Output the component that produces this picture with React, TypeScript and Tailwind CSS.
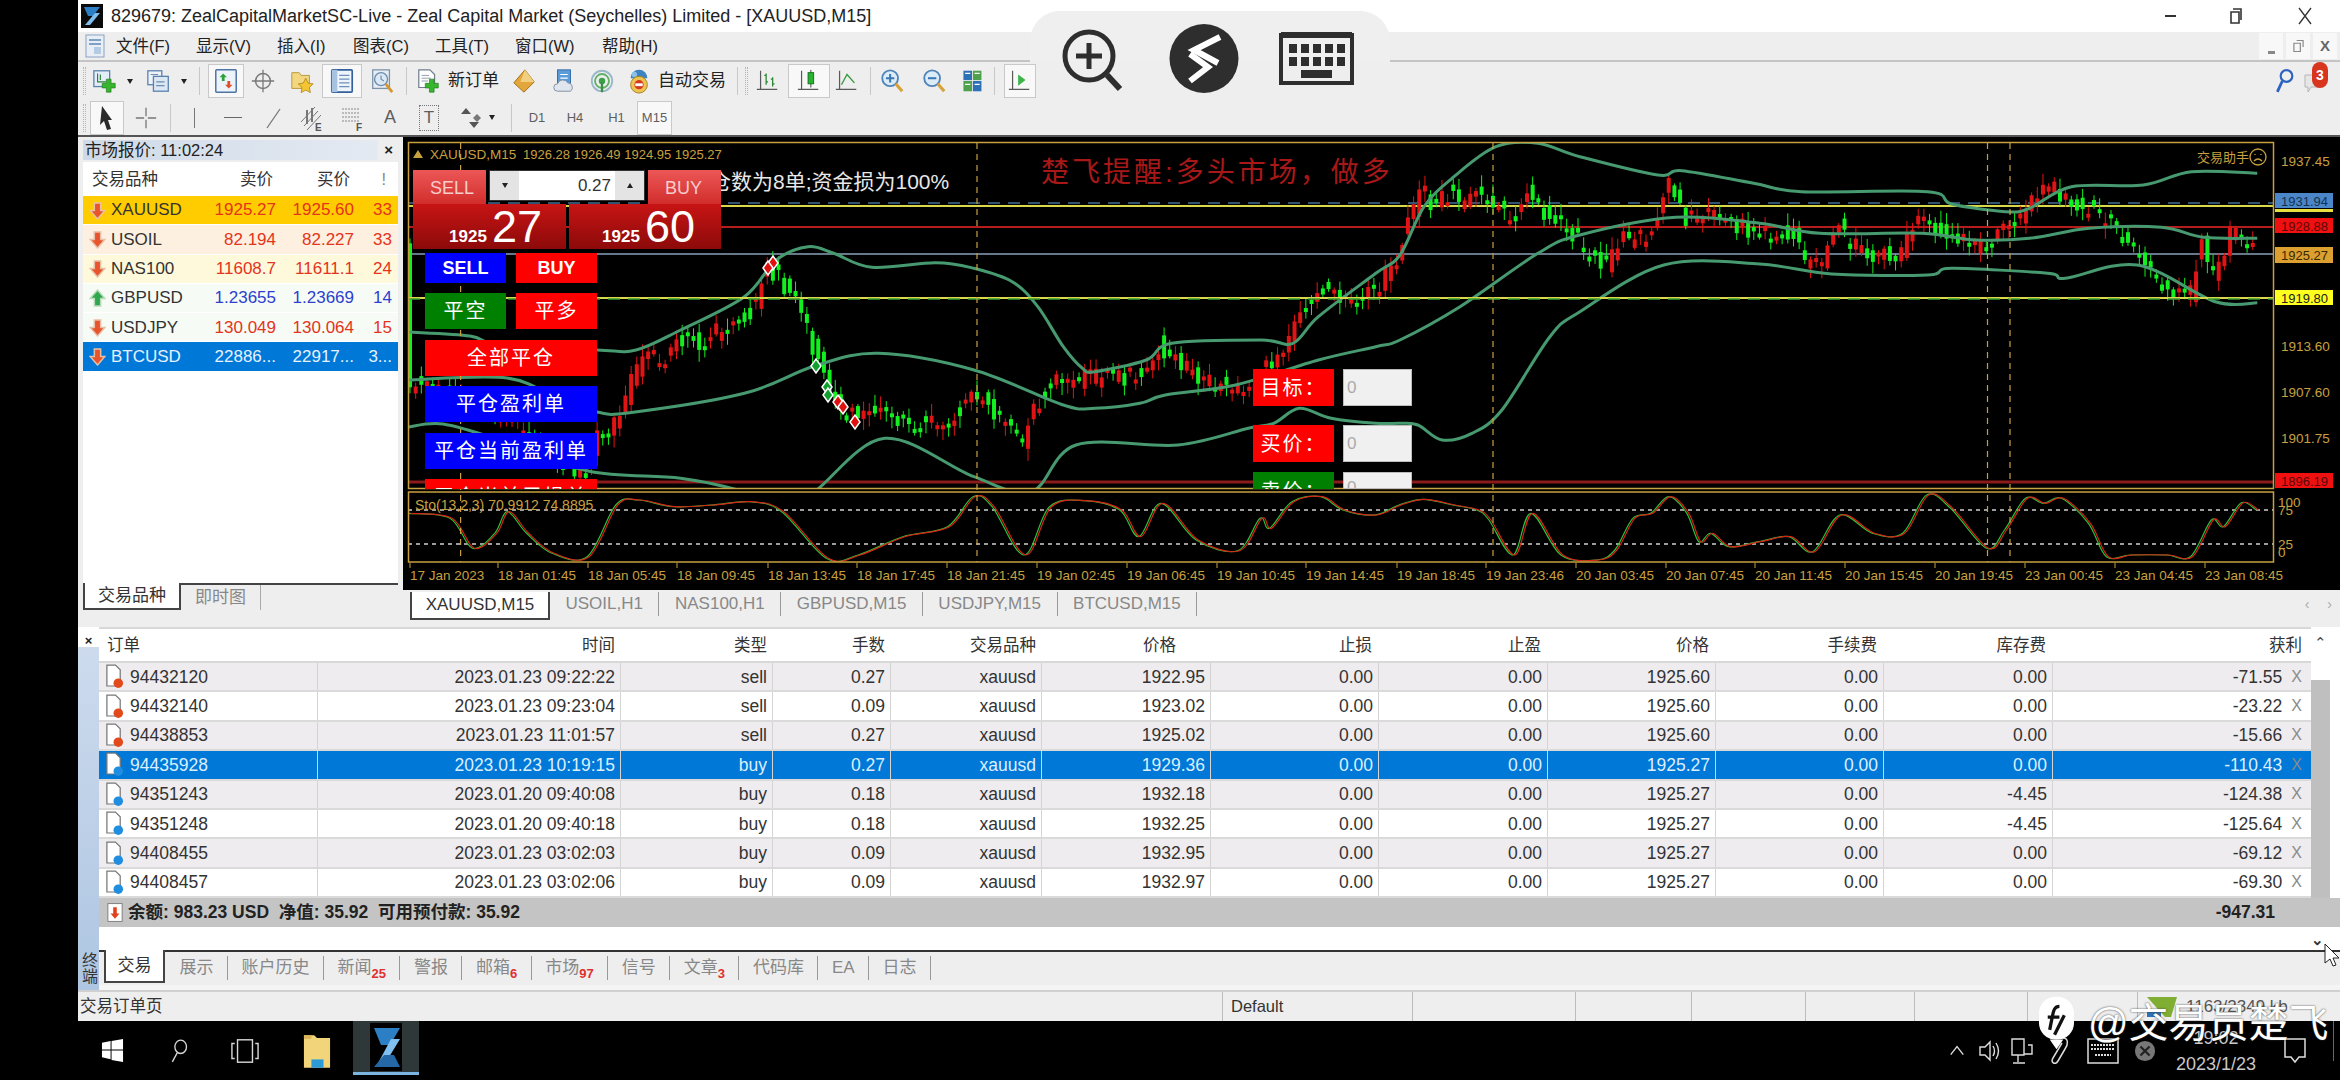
import React from 'react';

type Pt = [number, number];

// reference crops were read in crop units, these map them back to page pixels
const z4 = (a: number[]): Pt[] => {
    const out: Pt[] = [];
    for (let i = 0; i < a.length; i += 2) out.push([400 + a[i] / 1.568, 130 + a[i + 1] / 3]);
    return out;
};
const z5 = (a: number[]): Pt[] => {
    const out: Pt[] = [];
    for (let i = 0; i < a.length; i += 2) out.push([1400 + a[i] / 1.668, 130 + a[i + 1] / 3]);
    return out;
};

// catmull-rom through every point so the peaks stay where they were read
const smooth = (pts: Pt[]) => {
    let d = `M${pts[0][0].toFixed(1)} ${pts[0][1].toFixed(1)}`;
    for (let i = 0; i < pts.length - 1; i++) {
        const p0 = pts[Math.max(0, i - 1)];
        const p1 = pts[i];
        const p2 = pts[i + 1];
        const p3 = pts[Math.min(pts.length - 1, i + 2)];
        const c1x = p1[0] + (p2[0] - p0[0]) / 6;
        const c1y = p1[1] + (p2[1] - p0[1]) / 6;
        const c2x = p2[0] - (p3[0] - p1[0]) / 6;
        const c2y = p2[1] - (p3[1] - p1[1]) / 6;
        d += `C${c1x.toFixed(1)} ${c1y.toFixed(1)} ${c2x.toFixed(1)} ${c2y.toFixed(1)} ${p2[0].toFixed(1)} ${p2[1].toFixed(1)}`;
    }
    return d;
};

const upperBand: Pt[] = [
    [408, 332], [470, 336], [500, 345], [597, 350],
    ...z4([370, 660, 440, 600, 540, 500, 590, 390, 640, 350, 680, 370, 740, 412, 840, 398, 900, 415, 960, 455, 1000, 530, 1040, 650, 1070, 715, 1090, 725, 1170, 690, 1210, 640, 1350, 630, 1400, 640, 1440, 560, 1530, 430]),
    ...z5([0, 375, 40, 230, 90, 140, 160, 50, 230, 40, 300, 80, 430, 135, 470, 122, 590, 160, 670, 185, 880, 185, 920, 222, 1010, 245, 1050, 235, 1120, 170, 1240, 165, 1320, 125, 1430, 130]),
];
const middleBand: Pt[] = [
    [408, 380], [507, 378], [560, 400], [597, 412],
    ...z4([360, 848, 540, 790, 650, 708, 750, 670, 900, 720, 1040, 825, 1090, 835, 1160, 820, 1200, 795, 1310, 765, 1440, 690, 1530, 650]),
    ...z5([0, 630, 100, 530, 230, 370, 300, 315, 460, 262, 600, 280, 700, 310, 870, 310, 960, 330, 1050, 325, 1150, 295, 1270, 292, 1340, 322, 1430, 325]),
];
const lowerBand: Pt[] = [
    [408, 427], [443, 424], [500, 440], [588, 471],
    ...z4([440, 1045, 540, 1085, 600, 1130, 650, 1085, 760, 925, 900, 1040, 990, 1085, 1060, 945, 1220, 945, 1330, 895, 1370, 880, 1410, 835, 1460, 865, 1530, 880]),
    ...z5([0, 880, 30, 885, 70, 930, 120, 910, 170, 840, 250, 620, 300, 545, 440, 405, 600, 402, 720, 432, 880, 435, 920, 415, 1080, 430, 1110, 445, 1230, 405, 1360, 515, 1430, 518]),
];

const pricePath: Pt[] = [
    [408, 385], [425, 385], [470, 400], [520, 425], [560, 465], [590, 470],
    ...z4([315, 920, 350, 850, 380, 690, 420, 690, 440, 630, 480, 630, 520, 590, 560, 530, 580, 420, 600, 440, 625, 520, 650, 640, 665, 720, 680, 790, 700, 860, 730, 850, 780, 860, 820, 880, 870, 860, 905, 790, 940, 850, 980, 930, 1000, 830, 1030, 750, 1090, 745, 1140, 740, 1170, 720, 1195, 640, 1220, 690, 1260, 750, 1300, 770, 1340, 770, 1380, 680, 1400, 600, 1440, 470, 1480, 510, 1530, 490]),
    ...z5([0, 380, 20, 260, 45, 160, 60, 230, 80, 190, 110, 220, 130, 190, 160, 230, 200, 260, 210, 170, 240, 240, 280, 280, 310, 350, 350, 410, 370, 320, 410, 330, 430, 270, 455, 140, 480, 280, 520, 240, 560, 280, 620, 320, 660, 300, 680, 390, 710, 400, 730, 280, 760, 340, 790, 390, 840, 360, 880, 260, 930, 330, 980, 360, 1020, 290, 1050, 240, 1090, 170, 1130, 210, 1170, 260, 1210, 310, 1240, 390, 1290, 480, 1325, 490, 1340, 330, 1360, 430, 1390, 310, 1430, 370]),
];

const stoch: Pt[] = [
    ...z4([15, 1150, 80, 1165, 115, 1255, 150, 1210, 170, 1145, 200, 1210, 240, 1270, 295, 1280, 340, 1125, 375, 1110, 430, 1130, 490, 1125, 550, 1115, 600, 1145, 670, 1285, 720, 1275, 790, 1220, 860, 1190, 900, 1100, 930, 1130, 980, 1275, 1020, 1130, 1075, 1112, 1130, 1140, 1160, 1220, 1195, 1120, 1250, 1230, 1315, 1262, 1350, 1165, 1365, 1195, 1400, 1115, 1445, 1100, 1480, 1140, 1530, 1155]),
    ...z5([0, 1125, 40, 1108, 90, 1125, 130, 1140, 150, 1170, 190, 1275, 220, 1150, 270, 1275, 330, 1290, 360, 1260, 390, 1165, 420, 1150, 450, 1100, 480, 1150, 500, 1235, 520, 1210, 550, 1250, 600, 1235, 650, 1220, 690, 1265, 735, 1155, 790, 1210, 840, 1210, 880, 1095, 920, 1135, 980, 1255, 1010, 1200, 1045, 1105, 1075, 1120, 1105, 1105, 1150, 1180, 1180, 1280, 1220, 1275, 1280, 1275, 1320, 1280, 1355, 1170, 1375, 1190, 1405, 1118, 1430, 1140]),
];

const priceAt = (x: number) => {
    for (let i = 0; i < pricePath.length - 1; i++) {
        const [x0, y0] = pricePath[i];
        const [x1, y1] = pricePath[i + 1];
        if (x >= x0 && x <= x1) return y0 + ((y1 - y0) * (x - x0)) / (x1 - x0 || 1);
    }
    return pricePath[pricePath.length - 1][1];
};

const noise = (i: number) => {
    const v = Math.sin(i * 12.9898) * 43758.5453;
    return v - Math.floor(v);
};

const candles = (() => {
    const out: { x: number; top: number; h: number; wt: number; wb: number; up: boolean }[] = [];
    let i = 0;
    for (let x = 410; x < 2256; x += 5.67) {
        const a = priceAt(x - 3) + (noise(i) - 0.5) * 20;
        const b = priceAt(x + 3) + (noise(i + 500) - 0.5) * 20;
        const top = Math.min(a, b);
        const h = Math.max(4, Math.abs(a - b));
        out.push({ x, top, h, wt: top - 2 - noise(i + 900) * 10, wb: top + h + 2 + noise(i + 1300) * 10, up: b < a });
        i++;
    }
    return out;
})();

const timeLabels: [number, string][] = [
    [410, '17 Jan 2023'], [498, '18 Jan 01:45'], [588, '18 Jan 05:45'], [677, '18 Jan 09:45'], [768, '18 Jan 13:45'],
    [857, '18 Jan 17:45'], [947, '18 Jan 21:45'], [1037, '19 Jan 02:45'], [1127, '19 Jan 06:45'], [1217, '19 Jan 10:45'],
    [1306, '19 Jan 14:45'], [1397, '19 Jan 18:45'], [1486, '19 Jan 23:46'], [1576, '20 Jan 03:45'], [1666, '20 Jan 07:45'],
    [1755, '20 Jan 11:45'], [1845, '20 Jan 15:45'], [1935, '20 Jan 19:45'], [2025, '23 Jan 00:45'], [2115, '23 Jan 04:45'], [2205, '23 Jan 08:45'],
];

const GOLD = '#c8a040';

const markers: [number, number, string][] = [
    [773, 263, '#e01010'], [768, 268, '#e01010'], [816, 366, '#10a030'], [827, 387, '#10a030'], [828, 395, '#10a030'],
    [838, 402, '#e01010'], [843, 407, '#e01010'], [855, 422, '#e01010'],
];

const ChartDrawing = () => (
    <svg viewBox="403 137 1937 453" className="absolute inset-0 h-[453px] w-[1937px]">
        <defs>
            <clipPath id="mainClip"><rect x="408" y="143" width="1865" height="346" /></clipPath>
            <clipPath id="subClip"><rect x="408" y="493" width="1865" height="69" /></clipPath>
        </defs>
        <g clipPath="url(#mainClip)">
            <line x1="408" x2="2273" y1="203" y2="203" stroke="#3f6f96" strokeWidth="1.5" strokeDasharray="12 8" />
            <line x1="408" x2="2273" y1="206" y2="206" stroke="#d8d84a" strokeWidth="2" />
            <line x1="408" x2="2273" y1="227" y2="227" stroke="#b51c1c" strokeWidth="2" />
            <line x1="408" x2="2273" y1="254" y2="254" stroke="#66788a" strokeWidth="2" />
            <line x1="408" x2="2273" y1="482" y2="482" stroke="#8b1a1a" strokeWidth="3" />
            {candles.map((c, i) => (
                <g key={i} fill={c.up ? '#e01414' : '#12f020'} stroke={c.up ? '#e01414' : '#12f020'}>
                    <line x1={c.x} x2={c.x} y1={c.wt} y2={c.wb} strokeWidth="1" />
                    <rect x={c.x - 2} y={c.top} width="4" height={c.h} strokeWidth="0" />
                </g>
            ))}
            <g fill="none" stroke="#479a70" strokeWidth="3" strokeLinejoin="round">
                <path d={smooth(upperBand)} />
                <path d={smooth(middleBand)} />
                <path d={smooth(lowerBand)} />
            </g>
            <line x1="408" x2="2273" y1="298" y2="298" stroke="#d8d84a" strokeWidth="2" />
            <line x1="408" x2="2273" y1="299" y2="299" stroke="#3aa030" strokeWidth="1.5" strokeDasharray="12 8" />
            {markers.map(([x, y, c], i) => (
                <polygon key={i} points={`${x - 5},${y} ${x},${y - 7} ${x + 5},${y} ${x},${y + 7}`} fill={c} stroke="#fff" strokeWidth="1.5" />
            ))}
        </g>
        <g clipPath="url(#subClip)">
            <line x1="408" x2="2273" y1="510" y2="510" stroke="#d0d0d0" strokeWidth="1.5" strokeDasharray="4 4" />
            <line x1="408" x2="2273" y1="544" y2="544" stroke="#d0d0d0" strokeWidth="1.5" strokeDasharray="4 4" />
            <path d={smooth(stoch)} fill="none" stroke="#2fbe3c" strokeWidth="1.2" transform="translate(-1 0)" />
            <path d={smooth(stoch)} fill="none" stroke="#d82414" strokeWidth="1.2" transform="translate(1 0)" />
        </g>
        {[460.6, 977, 1493, 1987.5, 2010].map((x) => (
            <line key={x} x1={x} x2={x} y1="143" y2="562" stroke={GOLD} strokeWidth="1.2" strokeDasharray="6 5" />
        ))}
        <rect x="408.5" y="142.5" width="1865" height="346" fill="none" stroke={GOLD} strokeWidth="1.5" />
        <rect x="408.5" y="492" width="1865" height="70" fill="none" stroke={GOLD} strokeWidth="1.5" />
        <polygon points="413,158 423,158 418,150" fill={GOLD} />
        <g fill={GOLD} fontSize="13.5">
            <text x="430" y="159">XAUUSD,M15</text>
            <text x="523" y="159" fontSize="13">1926.28 1926.49 1924.95 1925.27</text>
            <text x="415" y="510" fontSize="14">Sto(13,2,3) 70.9912 74.8895</text>
            <text x="2197" y="162" fontSize="13">交易助手</text>
            {[[161, '1937.45'], [346, '1913.60'], [392, '1907.60'], [438, '1901.75']].map(([y, t]) => (
                <text key={t} x="2281" y={Number(y) + 5}>{t}</text>
            ))}
            <text x="2278" y="507">100</text>
            <text x="2278" y="515">75</text>
            <text x="2278" y="549">25</text>
            <text x="2278" y="557">0</text>
            {timeLabels.map(([x, t]) => (
                <g key={t}>
                    <line x1={x} x2={x} y1="563" y2="568" stroke={GOLD} />
                    <text x={x} y="580">{t}</text>
                </g>
            ))}
        </g>
        <g fill="none" stroke={GOLD} strokeWidth="1.3">
            <circle cx="2258" cy="157" r="8" />
            <path d="M2254 161q4-4 8 0M2255 154v1M2261 154v1" />
        </g>
        {[
            [193, 15, '#4a86c8', '#14324f', '1931.94'],
            [218, 15, '#f01010', '#5a0808', '1928.88'],
            [247, 16, '#dca030', '#3a2800', '1925.27'],
            [290, 15, '#ffff20', '#222', '1919.80'],
            [473, 15, '#f01010', '#5a0808', '1896.19'],
        ].map(([y, h, bg, fg, t]) => (
            <g key={String(t)}>
                <rect x="2275" y={Number(y)} width="58" height={Number(h)} fill={String(bg)} />
                <text x="2281" y={Number(y) + Number(h) / 2 + 5} fontSize="13" fill={String(fg)}>{t}</text>
            </g>
        ))}
        <rect x="2275" y="209" width="58" height="3" fill="#e8e040" />
    </svg>
);

const Slot = ({ className = '', active = false, children }: { className?: string; active?: boolean; children?: React.ReactNode }) => (
    <div className={`flex h-[34px] shrink-0 items-center justify-center ${active ? 'border border-[#c9c9c9] bg-[#f8f8f8]' : ''} ${className}`}>
        {children}
    </div>
);

const Sep = () => <div className="h-[28px] w-px bg-[#c8c8c8]" />;
const Grip = () => <div className="h-[28px] w-[3px] border-x border-dotted border-[#b5b5b5]" />;
const Caret = () => <div className="h-0 w-0 border-x-[3.5px] border-t-[5px] border-x-transparent border-t-[#222]" />;

const I = ({ children }: { children: React.ReactNode }) => (
    <svg viewBox="0 0 28 28" className="h-[28px] w-[26px]">{children}</svg>
);

const Plus = ({ x, y }: { x: number; y: number }) => (
    <path d={`M${x - 2.5} ${y - 7}h5v4.5h4.5v5h-4.5v4.5h-5v-4.5h-4.5v-5h4.5z`} fill="#37b52e" stroke="#1d7a1a" strokeWidth=".7" />
);

const NewChartIcon = () => (
    <I>
        <rect x="2" y="3" width="17" height="17" fill="#e3edf7" stroke="#5b82ad" strokeWidth="1.4" />
        <path d="M6 6v9h9M9 7v6" fill="none" stroke="#2e7f36" strokeWidth="1.2" />
        <Plus x={18} y={19} />
    </I>
);
const ProfileIcon = () => (
    <I>
        <rect x="2" y="3" width="15" height="15" fill="#eef3f9" stroke="#5b82ad" strokeWidth="1.4" />
        <rect x="8" y="9" width="16" height="16" fill="#dbe7f3" stroke="#5b82ad" strokeWidth="1.4" />
        <path d="M5 7h8M11 15h9M11 19h9" stroke="#6d8db2" strokeWidth="1.2" />
    </I>
);
const MarketIcon = () => (
    <I>
        <rect x="3" y="2" width="22" height="24" rx="1" fill="#edf3fa" stroke="#4e74a3" strokeWidth="1.6" />
        <path d="M11 6l4 4h-2.5v4h-3v-4H7z" fill="#2ea23a" />
        <path d="M17 22l-4-4h2.5v-4h3v4H21z" fill="#e0502a" />
    </I>
);
const CrossIcon = () => (
    <I>
        <circle cx="14" cy="14" r="8" fill="none" stroke="#7a7a7a" strokeWidth="1.6" />
        <path d="M14 2v24M2 14h24" stroke="#7a7a7a" strokeWidth="1.4" />
    </I>
);
const FolderStarIcon = () => (
    <I>
        <path d="M3 5h8l2 3h9v14H3z" fill="#f2d680" stroke="#b8963a" />
        <path d="M18 11l2.6 5.3 5.4.8-4 3.8 1 5.6-5-2.7-5 2.7 1-5.6-4-3.8 5.4-.8z" fill="#f4c531" stroke="#a87d10" strokeWidth=".8" />
    </I>
);
const TerminalIcon = () => (
    <I>
        <rect x="3" y="2" width="22" height="24" rx="1" fill="#eef4fb" stroke="#33609a" strokeWidth="1.8" />
        <rect x="3" y="2" width="6" height="24" fill="#a8c3e2" />
        <path d="M11 8h11M11 12h11M11 16h11M11 20h11" stroke="#6c8fbb" strokeWidth="1.3" />
    </I>
);
const TesterIcon = () => (
    <I>
        <rect x="4" y="2" width="18" height="20" fill="#e9eef4" stroke="#7e93ab" strokeWidth="1.4" />
        <circle cx="13" cy="12" r="7" fill="#dce9f5" stroke="#6e8fb1" strokeWidth="1.5" />
        <path d="M13 8v4l3 2" fill="none" stroke="#6e8fb1" strokeWidth="1.3" />
        <path d="M18 17l7 9" stroke="#d4972f" strokeWidth="3" />
    </I>
);
const NewOrderIcon = () => (
    <I>
        <path d="M3 2h12l5 5v14H3z" fill="#fff" stroke="#6f7d8c" strokeWidth="1.3" />
        <path d="M6 8h8M6 11h10M6 14h7" stroke="#8b98a6" />
        <Plus x={17} y={19} />
    </I>
);
const DiamondIcon = () => (
    <I>
        <path d="M15 2l10 13-11 11L3 16z" fill="#e3a63a" stroke="#9d6c17" />
        <path d="M15 2l-5 13h15z" fill="#f1cf80" />
    </I>
);
const CloudIcon = () => (
    <I>
        <rect x="7" y="2" width="14" height="15" fill="#5b9bd8" stroke="#2e6aa8" />
        <path d="M10 7h8M10 11h8" stroke="#fff" strokeWidth="1.3" />
        <path d="M7 25a4 4 0 0 1 0-8 6 6 0 0 1 11-1 5 5 0 0 1 3 9z" fill="#dfe6ee" stroke="#7e8ea0" />
    </I>
);
const SignalIcon = () => (
    <I>
        <circle cx="14" cy="14" r="11" fill="none" stroke="#9ab8c9" strokeWidth="2" />
        <circle cx="14" cy="14" r="7.5" fill="none" stroke="#62b06a" strokeWidth="2" />
        <circle cx="14" cy="14" r="3.5" fill="#3aa244" />
        <path d="M14 15v11" stroke="#3b8f45" strokeWidth="2.5" />
    </I>
);
const AutoIcon = () => (
    <I>
        <path d="M5 11a9 9 0 0 1 18 0z" fill="#3d83bf" />
        <circle cx="9" cy="7" r="3" fill="#8cc0e8" />
        <circle cx="14" cy="18" r="9" fill="#edc452" stroke="#a67d1a" />
        <circle cx="14" cy="18" r="5" fill="#d7391f" />
        <rect x="10" y="16.5" width="8" height="3" fill="#fff" />
    </I>
);
const AxisIcon = ({ children }: { children: React.ReactNode }) => (
    <I>
        <path d="M6 3v20M2 23h22" stroke="#5a5a5a" strokeWidth="1.3" fill="none" />
        {children}
    </I>
);
const ZoomIcon = ({ plus }: { plus: boolean }) => (
    <I>
        <circle cx="12" cy="11" r="8.5" fill="#dcebf8" stroke="#4f84b8" strokeWidth="2" />
        <path d={plus ? 'M7.5 11h9M12 6.5v9' : 'M7.5 11h9'} stroke="#3a78b5" strokeWidth="2.2" />
        <path d="M18 17l7 8" stroke="#d8a23a" strokeWidth="3.4" />
    </I>
);
const GridIcon = () => (
    <I>
        <rect x="4" y="2" width="10" height="11" fill="#2e70b5" />
        <rect x="15" y="2" width="10" height="11" fill="#4fa24b" />
        <rect x="4" y="14" width="10" height="12" fill="#4fa24b" />
        <rect x="15" y="14" width="10" height="12" fill="#2e70b5" />
        <path d="M6 5h6M17 5h6M6 18h6M17 18h6" stroke="#fff" strokeWidth="1.4" />
    </I>
);

const ToolbarOne = () => (
    <div className="flex h-[38px] items-center bg-[#eeeeee]">
        <Slot className="w-[12px]"><Grip /></Slot>
        <Slot className="w-[30px]"><NewChartIcon /></Slot>
        <Slot className="w-[20px]"><Caret /></Slot>
        <Slot className="w-[38px]"><ProfileIcon /></Slot>
        <Slot className="w-[12px]"><Caret /></Slot>
        <Slot className="w-[18px]"><Sep /></Slot>
        <Slot active className="w-[36px]"><MarketIcon /></Slot>
        <Slot className="w-[38px]"><CrossIcon /></Slot>
        <Slot className="w-[40px]"><FolderStarIcon /></Slot>
        <Slot active className="w-[40px]"><TerminalIcon /></Slot>
        <Slot className="w-[40px]"><TesterIcon /></Slot>
        <Slot className="w-[8px]"><Sep /></Slot>
        <Slot className="w-[38px]"><NewOrderIcon /></Slot>
        <Slot className="w-[52px] justify-start text-[17px] text-[#222]">新订单</Slot>
        <Slot className="w-[48px]"><DiamondIcon /></Slot>
        <Slot className="w-[32px]"><CloudIcon /></Slot>
        <Slot className="w-[44px]"><SignalIcon /></Slot>
        <Slot className="w-[30px]"><AutoIcon /></Slot>
        <Slot className="w-[76px] text-[17px] text-[#222]">自动交易</Slot>
        <Slot className="w-[14px]"><Sep /></Slot>
        <Slot className="w-[4px]"><Grip /></Slot>
        <Slot className="w-[40px]">
            <AxisIcon><path d="M12 6v12M10 8h2M12 15h2M19 10v10M17 12h2M19 17h2" stroke="#2a8a32" strokeWidth="1.4" /></AxisIcon>
        </Slot>
        <Slot active className="w-[42px]">
            <AxisIcon><path d="M16 2v19" stroke="#3a3a3a" /><rect x="13" y="5" width="6" height="12" fill="#25b52e" stroke="#176e1c" /></AxisIcon>
        </Slot>
        <Slot className="w-[34px]">
            <AxisIcon><path d="M8 18l6-11 8 9" fill="none" stroke="#3b9a42" strokeWidth="1.5" /></AxisIcon>
        </Slot>
        <Slot className="w-[12px]"><Sep /></Slot>
        <Slot className="w-[32px]"><ZoomIcon plus /></Slot>
        <Slot className="w-[52px]"><ZoomIcon plus={false} /></Slot>
        <Slot className="w-[24px]"><GridIcon /></Slot>
        <Slot className="w-[20px]"><Sep /></Slot>
        <Slot active className="w-[32px]">
            <AxisIcon><path d="M12 7l8 6-8 6z" fill="#3cb54a" /></AxisIcon>
        </Slot>
        <div className="ml-auto mr-[12px] flex items-center gap-[8px]">
            <svg viewBox="0 0 24 30" className="h-[26px] w-[20px]">
                <circle cx="15" cy="9" r="7" fill="none" stroke="#2d63c0" strokeWidth="2.6" />
                <path d="M10 15L4 28" stroke="#2d63c0" strokeWidth="3.4" />
            </svg>
            <div className="relative h-[28px] w-[26px]">
                <svg viewBox="0 0 26 28" className="absolute inset-0 h-[28px] w-[26px]">
                    <path d="M3 8h15v12H9l-3 5v-5H3z" fill="#e6e6e6" stroke="#b5b5b5" />
                </svg>
                <div className="absolute right-0 top-[-5px] flex h-[26px] w-[16px] items-center justify-center rounded-full bg-[#d8351f] text-[14px] font-bold text-white">3</div>
            </div>
        </div>
    </div>
);

const ToolbarTwo = () => (
    <div className="flex h-[35px] items-center bg-[#eeeeee] text-[#5e5e5e]">
        <Slot className="w-[12px]"><Grip /></Slot>
        <Slot active className="w-[34px]">
            <svg viewBox="0 0 20 28" className="h-[28px] w-[20px]"><path d="M5 2l10 14H11l3 9-4 1-3-9-4 4z" fill="#2a2a2a" /></svg>
        </Slot>
        <Slot className="w-[44px]">
            <svg viewBox="0 0 26 26" className="h-[26px] w-[24px]"><path d="M13 2v9M13 15v9M2 13h9M15 13h9" stroke="#777" strokeWidth="1.4" /></svg>
        </Slot>
        <Slot className="w-[4px]"><Sep /></Slot>
        <Slot className="w-[44px]"><div className="h-[20px] w-px bg-[#777]" /></Slot>
        <Slot className="w-[34px]"><div className="h-px w-[18px] bg-[#666]" /></Slot>
        <Slot className="w-[48px]">
            <svg viewBox="0 0 20 24" className="h-[24px] w-[20px]"><path d="M3 22L16 3" stroke="#777" strokeWidth="1.3" /></svg>
        </Slot>
        <Slot className="w-[26px]">
            <svg viewBox="0 0 24 28" className="h-[28px] w-[24px]">
                <path d="M2 18L16 3M5 22L19 7M8 26L22 11" stroke="#777" />
                <path d="M8 6v14M13 4v14" stroke="#777" strokeWidth="2" />
                <text x="16" y="27" fontSize="10" fontWeight="700" fill="#555">E</text>
            </svg>
        </Slot>
        <Slot className="w-[56px]">
            <svg viewBox="0 0 26 28" className="h-[28px] w-[26px]">
                <path d="M3 5h18M3 9h18M3 13h18M3 17h18" stroke="#888" strokeDasharray="2 1" />
                <text x="17" y="27" fontSize="10" fontWeight="700" fill="#555">F</text>
            </svg>
        </Slot>
        <Slot className="w-[20px] text-[18px]">A</Slot>
        <Slot className="w-[58px]">
            <div className="flex h-[26px] w-[20px] items-center justify-center border border-dotted border-[#777] text-[17px] leading-none">T</div>
        </Slot>
        <Slot className="w-[24px]">
            <svg viewBox="0 0 24 26" className="h-[26px] w-[24px]">
                <path d="M8 3l5 6H3z" fill="#555" />
                <path d="M16 23l-5-6h10z" fill="#555" />
                <path d="M19 9l4 4-4 4-4-4z" fill="#777" />
            </svg>
        </Slot>
        <Slot className="w-[20px]"><Caret /></Slot>
        <Slot className="w-[18px]"><Sep /></Slot>
        <Slot className="w-[34px] text-[13px]">D1</Slot>
        <Slot className="w-[42px] text-[13px]">H4</Slot>
        <Slot className="w-[41px] text-[13px]">H1</Slot>
        <Slot active className="w-[35px] text-[13px]">M15</Slot>
    </div>
);

const watchRows = [
    { name: 'XAUUSD', bid: '1925.27', ask: '1925.60', sp: '33', up: false, row: 'bg-[#ffcc00]', text: 'text-[#e4341c]', nameText: 'text-[#333]' },
    { name: 'USOIL', bid: '82.194', ask: '82.227', sp: '33', up: false, row: 'bg-[#fdf0e1]', text: 'text-[#e4341c]', nameText: 'text-[#333]' },
    { name: 'NAS100', bid: '11608.7', ask: '11611.1', sp: '24', up: false, row: 'bg-[#fff9dc]', text: 'text-[#e4341c]', nameText: 'text-[#333]' },
    { name: 'GBPUSD', bid: '1.23655', ask: '1.23669', sp: '14', up: true, row: 'bg-[#f6fcf5]', text: 'text-[#2c3fcf]', nameText: 'text-[#333]' },
    { name: 'USDJPY', bid: '130.049', ask: '130.064', sp: '15', up: false, row: 'bg-[#f6fcf5]', text: 'text-[#e4341c]', nameText: 'text-[#333]' },
    { name: 'BTCUSD', bid: '22886...', ask: '22917...', sp: '3...', up: false, row: 'bg-[#0078d7]', text: 'text-[#e6f2ff]', nameText: 'text-[#e6f2ff]' },
];

const ArrowMark = ({ up }: { up: boolean }) => (
    <svg viewBox="0 0 16 18" className="h-[19px] w-[17px] shrink-0">
        {up ? (
            <path d="M8 1l7 8h-4v7H5V9H1z" fill="#30a850" stroke="#b8dcb8" strokeWidth="1.4" />
        ) : (
            <path d="M8 17l7-8h-4V2H5v7H1z" fill="#e8552c" stroke="#e8c0a8" strokeWidth="1.4" />
        )}
    </svg>
);

const MarketWatch = () => (
    <div className="flex h-[490px] w-[325px] shrink-0 flex-col bg-[#eeeeee] pl-[5px] pr-[5px] pt-[3px]">
        <div className="flex h-[20px] items-center justify-between">
            <div className="flex h-[20px] w-[295px] items-center bg-gradient-to-r from-[#cfdae8] to-[#e4eaf2] pl-[2px] text-[16.5px] text-[#222]">市场报价: 11:02:24</div>
            <span className="mr-[5px] text-[15px] font-bold text-[#222]">×</span>
        </div>
        <div className="mt-[2px] flex h-[421px] flex-col bg-white">
            <div className="grid h-[34px] grid-cols-[121px_77px_78px_39px] items-center text-[16.5px] text-[#333]">
                <span className="pl-[9px]">交易品种</span>
                <span className="pr-[8px] text-right">卖价</span>
                <span className="pr-[9px] text-right">买价</span>
                <span className="pr-[12px] text-right text-[#888]">!</span>
            </div>
            {watchRows.map((r) => (
                <div key={r.name} className={`grid h-[29.3px] grid-cols-[121px_77px_78px_39px] items-center border-b border-white text-[17px] ${r.row}`}>
                    <span className={`flex items-center gap-[5px] pl-[6px] ${r.nameText}`}><ArrowMark up={r.up} />{r.name}</span>
                    <span className={`pr-[5px] text-right ${r.text}`}>{r.bid}</span>
                    <span className={`pr-[5px] text-right ${r.text}`}>{r.ask}</span>
                    <span className={`pr-[6px] text-right ${r.text}`}>{r.sp}</span>
                </div>
            ))}
        </div>
        <div className="flex h-[27px] items-stretch border-t-2 border-[#444] text-[17px]">
            <div className="-mt-[2px] flex w-[98px] items-center justify-center border-x-2 border-b-2 border-x-[#444] border-b-[#444] border-t-0 bg-white text-[#333]">交易品种</div>
            <div className="flex w-[80px] items-center justify-center border-r border-[#aaa] text-[#888]">即时图</div>
        </div>
    </div>
);

const redBtn = 'bg-[#ff0000]';
const blueBtn = 'bg-[#0000ff]';
const greenBtn = 'bg-[#008000]';
const btnBase = 'absolute flex items-center justify-center text-white text-[20px] tracking-[2px]';
const latinBtn = 'absolute flex items-center justify-center text-white text-[18px] font-bold';

const ChartPanel = () => (
    <div className="relative h-[453px] w-[1937px] shrink-0 overflow-hidden bg-black">
        <ChartDrawing />

        {/* text notes printed on the chart */}
        <div className="absolute left-[307px] top-[32px] text-[21px] leading-[26px] text-[#e8e8e8]">仓数为8单;资金损为100%</div>
        <div className="absolute left-[638px] top-[19px] text-[28px] leading-[34px] tracking-[3px] text-[#a81818]">楚飞提醒:多头市场，做多</div>

        {/* one click trading panel */}
        <div className="absolute left-[10px] top-[33px] h-[46px] w-[73px] border-b border-[#ff9c9c] bg-gradient-to-b from-[#ec5656] to-[#c81a1a] pl-[17px] pt-[5px] text-[18px] text-[#f8cccc]">SELL</div>
        <div className="absolute left-[245px] top-[33px] h-[46px] w-[73px] border-b border-[#ff9c9c] bg-gradient-to-b from-[#ec5656] to-[#c81a1a] pl-[17px] pt-[5px] text-[18px] text-[#f8cccc]">BUY</div>
        <div className="absolute left-[86px] top-[33px] flex h-[31px] w-[156px] border border-[#333] bg-white">
            <div className="flex w-[29px] items-center justify-center bg-[#e4e4e4]"><Caret /></div>
            <div className="flex-1 pr-[4px] text-right text-[17px] leading-[29px] text-[#333]">0.27</div>
            <div className="flex w-[29px] items-center justify-center bg-[#e4e4e4]">
                <div className="h-0 w-0 border-x-[3.5px] border-b-[5px] border-x-transparent border-b-[#222]" />
            </div>
        </div>
        <div className="absolute left-[10px] top-[67px] flex h-[45px] w-[153px] items-end justify-end bg-gradient-to-b from-[#c81414] to-[#8c0a0a] pb-[1px] pr-[24px] text-white">
            <span className="mb-[3px] mr-[5px] text-[17px] font-bold leading-none">1925</span>
            <span className="text-[45px] leading-[42px]">27</span>
        </div>
        <div className="absolute left-[166px] top-[67px] flex h-[45px] w-[152px] items-end justify-end bg-gradient-to-b from-[#c81414] to-[#8c0a0a] pb-[1px] pr-[26px] text-white">
            <span className="mb-[3px] mr-[5px] text-[17px] font-bold leading-none">1925</span>
            <span className="text-[45px] leading-[42px]">60</span>
        </div>

        {/* script buttons */}
        <div className={`${latinBtn} ${blueBtn} left-[22px] top-[116px] h-[30px] w-[81px]`}>SELL</div>
        <div className={`${latinBtn} ${redBtn} left-[113px] top-[116px] h-[30px] w-[81px]`}>BUY</div>
        <div className={`${btnBase} ${greenBtn} left-[22px] top-[156px] h-[36px] w-[81px]`}>平空</div>
        <div className={`${btnBase} ${redBtn} left-[113px] top-[156px] h-[36px] w-[81px]`}>平多</div>
        <div className={`${btnBase} ${redBtn} left-[22px] top-[203px] h-[36px] w-[172px]`}>全部平仓</div>
        <div className={`${btnBase} ${blueBtn} left-[22px] top-[249px] h-[36px] w-[172px]`}>平仓盈利单</div>
        <div className={`${btnBase} ${blueBtn} left-[22px] top-[296px] h-[36px] w-[172px]`}>平仓当前盈利单</div>
        <div className="absolute left-[22px] top-[342px] h-[10px] w-[172px] overflow-hidden">
            <div className={`${btnBase} ${redBtn} left-0 top-0 h-[36px] w-[172px]`}>平仓当前亏损单</div>
        </div>

        <div className={`${btnBase} ${redBtn} left-[850px] top-[232px] h-[37px] w-[81px]`}>目标：</div>
        <div className="absolute left-[940px] top-[232px] flex h-[37px] w-[69px] items-center border border-[#bbb] bg-[#f0f0f0] pl-[3px] text-[17px] text-[#aaa]">0</div>
        <div className={`${btnBase} ${redBtn} left-[850px] top-[288px] h-[37px] w-[81px]`}>买价：</div>
        <div className="absolute left-[940px] top-[288px] flex h-[37px] w-[69px] items-center border border-[#bbb] bg-[#f0f0f0] pl-[3px] text-[17px] text-[#aaa]">0</div>
        <div className="absolute left-[850px] top-[335px] h-[17px] w-[81px] overflow-hidden">
            <div className={`${btnBase} ${greenBtn} left-0 top-0 h-[37px] w-[81px]`}>卖价：</div>
        </div>
        <div className="absolute left-[940px] top-[335px] h-[17px] w-[69px] overflow-hidden border border-[#bbb] bg-[#f0f0f0] pl-[3px] text-[17px] leading-[30px] text-[#aaa]">0</div>
    </div>
);

const ChartTabs = () => (
    <div className="flex h-[37px] items-start bg-[#eeeeee] pl-[7px] pt-[2px] text-[17px]">
        <div className="flex h-[28px] w-[140px] items-center justify-center border-x-2 border-b-2 border-x-[#444] border-b-[#444] bg-white text-[#333]">XAUUSD,M15</div>
        {['USOIL,H1', 'NAS100,H1', 'GBPUSD,M15', 'USDJPY,M15', 'BTCUSD,M15'].map((t) => (
            <div key={t} className="flex h-[24px] items-center border-r border-[#999] px-[15.5px] text-[#888]">{t}</div>
        ))}
        <div className="ml-auto mr-[8px] mt-[2px] flex gap-[18px] text-[14px] text-[#aaa]">
            <span>‹</span>
            <span>›</span>
        </div>
    </div>
);

const orderCols = 'grid-cols-[219px_303px_152px_118px_151px_169px_168px_169px_168px_168px_169px_258px]';

const orders = [
    ['94432120', '2023.01.23 09:22:22', 'sell', '0.27', '1922.95', '1925.60', '0.00', '-71.55'],
    ['94432140', '2023.01.23 09:23:04', 'sell', '0.09', '1923.02', '1925.60', '0.00', '-23.22'],
    ['94438853', '2023.01.23 11:01:57', 'sell', '0.27', '1925.02', '1925.60', '0.00', '-15.66'],
    ['94435928', '2023.01.23 10:19:15', 'buy', '0.27', '1929.36', '1925.27', '0.00', '-110.43'],
    ['94351243', '2023.01.20 09:40:08', 'buy', '0.18', '1932.18', '1925.27', '-4.45', '-124.38'],
    ['94351248', '2023.01.20 09:40:18', 'buy', '0.18', '1932.25', '1925.27', '-4.45', '-125.64'],
    ['94408455', '2023.01.23 03:02:03', 'buy', '0.09', '1932.95', '1925.27', '0.00', '-69.12'],
    ['94408457', '2023.01.23 03:02:06', 'buy', '0.09', '1932.97', '1925.27', '0.00', '-69.30'],
];

const OrderIcon = ({ buy }: { buy: boolean }) => (
    <svg viewBox="0 0 20 26" className="h-[25px] w-[19px] shrink-0">
        <path d="M2 1h9l5 5v17H2z" fill="#fff" stroke="#777" strokeWidth="1.3" />
        <circle cx="14" cy="20" r="5" fill={buy ? '#1f8de0' : '#e24a1c'} />
    </svg>
);

const Cell = ({ className = '', children }: { className?: string; children?: React.ReactNode }) => (
    <div className={`flex h-full items-center justify-end border-r border-[#d4d4d4] pr-[5px] ${className}`}>{children}</div>
);

const OrdersTable = () => (
    <div className="flex flex-1 flex-col bg-white">
        <div className="flex h-[271px]">
            <div className="w-[2212px] shrink-0">
                <div className={`grid h-[36px] items-center border-t-2 border-b-2 border-[#d8d8d8] ${orderCols} text-[16.5px] text-[#333]`}>
                    <span className="pl-[8px]">订单</span>
                    {['时间', '类型', '手数', '交易品种'].map((h) => (
                        <span key={h} className="pr-[6px] text-right">{h}</span>
                    ))}
                    <span className="pr-[35px] text-right">价格</span>
                    {['止损', '止盈', '价格', '手续费', '库存费'].map((h, i) => (
                        <span key={i} className="pr-[7px] text-right">{h}</span>
                    ))}
                    <span className="pr-[9px] text-right">获利</span>
                </div>
                {orders.map((o) => {
                    const sel = o[0] === '94435928';
                    const bg = sel ? 'bg-[#0078d7] text-[#dcefff]' : orders.indexOf(o) % 2 === 0 ? 'bg-[#efecef] text-[#333]' : 'bg-white text-[#333]';
                    return (
                        <div key={o[0]} className={`grid h-[29.4px] items-center border-b-2 border-[#dadada] text-[17.5px] ${orderCols} ${bg}`}>
                            <div className="flex h-full items-center gap-[6px] border-r border-[#d4d4d4] pl-[6px]"><OrderIcon buy={o[2] === 'buy'} />{o[0]}</div>
                            <Cell>{o[1]}</Cell>
                            <Cell>{o[2]}</Cell>
                            <Cell>{o[3]}</Cell>
                            <Cell>xauusd</Cell>
                            <Cell>{o[4]}</Cell>
                            <Cell>0.00</Cell>
                            <Cell>0.00</Cell>
                            <Cell>{o[5]}</Cell>
                            <Cell>0.00</Cell>
                            <Cell>{o[6]}</Cell>
                            <div className="flex h-full items-center justify-end gap-[9px] pr-[9px]">
                                <span>{o[7]}</span>
                                <span className="text-[16px] text-[#8a8a8a]">X</span>
                            </div>
                        </div>
                    );
                })}
            </div>
            <div className="flex w-[19px] flex-col items-center text-[#444]">
                <div className="h-[53px] pt-[8px] text-[15px] leading-none">⌃</div>
                <div className="w-full flex-1 bg-[#bfbfbf]" />
            </div>
            <div className="flex-1" />
        </div>
        <div className="flex h-[29px] items-center justify-between bg-[#c4c4c4] pl-[8px] text-[17.5px] font-bold text-[#222]">
            <span className="flex items-center gap-[5px]">
                <svg viewBox="0 0 18 22" className="h-[21px] w-[16px]">
                    <rect x="1" y="1" width="16" height="20" fill="#fff" stroke="#777" />
                    <path d="M9 18l5-6h-3V5H7v7H4z" fill="#e2401c" />
                </svg>
                余额: 983.23 USD&nbsp; 净值: 35.92&nbsp; 可用预付款: 35.92
            </span>
            <span className="mr-[65px]">-947.31</span>
        </div>
        <div className="relative h-[23px]">
            <div className="absolute right-[16px] top-[5px] text-[15px] font-bold leading-none text-[#333]">⌄</div>
        </div>
    </div>
);

const bottomTabs: [string, string?][] = [
    ['展示'], ['账户历史'], ['新闻', '25'], ['警报'], ['邮箱', '6'], ['市场', '97'], ['信号'], ['文章', '3'], ['代码库'], ['EA'], ['日志'],
];

const BottomTabs = () => (
    <div className="flex h-[35px] items-start border-t-2 border-[#333] bg-[#eeeeee] pl-[5px] text-[17px]">
        <div className="-mt-[2px] flex h-[33px] w-[61px] items-center justify-center border-x-2 border-b-2 border-x-[#444] border-b-[#444] bg-white text-[#333]">交易</div>
        <div className="ml-[1px] flex pt-[4px]">
            {bottomTabs.map(([t, sub]) => (
                <div key={t} className="flex h-[24px] items-center border-r border-[#999] px-[13.5px] text-[#888]">
                    {t}
                    {sub && <span className="mt-[12px] text-[13px] font-bold text-[#e03030]">{sub}</span>}
                </div>
            ))}
        </div>
    </div>
);

const statusCells: [string, string][] = [
    ['w-[1145px]', '交易订单页'],
    ['w-[190px]', 'Default'],
    ['w-[163px]', ''],
    ['w-[116px]', ''],
    ['w-[114px]', ''],
    ['w-[109px]', ''],
    ['w-[113px]', ''],
    ['w-[110px]', ''],
];

const StatusBar = () => (
    <div className="flex h-[31px] items-stretch border-t-2 border-[#d0d0d0] bg-[#eeeeee] text-[16.5px] text-[#333]">
        {statusCells.map(([w, t], i) => (
            <div key={i} className={`flex shrink-0 items-center border-r border-[#bcbcbc] pl-[2px] ${i === 1 ? 'pl-[8px]' : ''} ${w}`}>{t}</div>
        ))}
        <div className="flex items-center gap-[8px] pl-[8px] text-[17px] text-[#555]">
            <svg viewBox="0 0 32 24" className="h-[24px] w-[32px]">
                <path d="M1 2h30l-6 20H19z" fill="#7fae32" />
                <rect x="1" y="14" width="14" height="8" fill="#2e72b5" />
            </svg>
            1163/2349 kb
        </div>
    </div>
);

const Taskbar = () => (
    <div className="flex h-[59px] items-center bg-black text-[#cfcfcf]">
        <div className="flex w-[353px] items-center">
            <div className="flex w-[159px] justify-center pl-[65px]">
                <svg viewBox="0 0 24 26" className="h-[25px] w-[23px]">
                    <path d="M1 5l9-2v9H1zM11 3l12-2v11H11zM1 13h9v9l-9-2zM11 13h12v12l-12-2z" fill="#fff" />
                </svg>
            </div>
            <div className="flex w-[40px] justify-center">
                <svg viewBox="0 0 24 28" className="h-[28px] w-[20px]">
                    <ellipse cx="14" cy="9" rx="7" ry="8" fill="none" stroke="#d8d8d8" strokeWidth="1.6" />
                    <path d="M10 16L4 27" stroke="#d8d8d8" strokeWidth="1.6" />
                </svg>
            </div>
            <div className="flex w-[92px] justify-center">
                <svg viewBox="0 0 30 28" className="h-[28px] w-[28px]">
                    <rect x="7" y="2" width="16" height="24" fill="none" stroke="#d8d8d8" strokeWidth="1.5" />
                    <path d="M4 6H1v16h3M26 6h3v16h-3" fill="none" stroke="#d8d8d8" strokeWidth="1.5" />
                </svg>
            </div>
            <div className="flex w-[52px] justify-center">
                <svg viewBox="0 0 30 36" className="h-[36px] w-[28px]">
                    <path d="M1 1h11l3 3h14v32H1z" fill="#f2d47a" />
                    <path d="M9 36v-9h13v9z" fill="#2d9ad8" />
                    <path d="M1 1h8v4H1z" fill="#d9b458" />
                </svg>
            </div>
        </div>
        <div className="flex h-[54px] w-[66px] items-center justify-center self-start border-b-[3px] border-[#7cb4e0] bg-[#2f3838]">
            <svg viewBox="0 0 32 48" className="h-[48px] w-[32px]">
                <rect width="32" height="48" fill="#000" />
                <path d="M4 5h26L20 22h-9z" fill="#2c7fc4" />
                <path d="M21 16L6 44h7l17-28z" fill="#7fc0f0" />
                <path d="M4 44h26l-6-12H14z" fill="#2568a8" />
            </svg>
        </div>
        <div className="ml-auto flex h-full items-center">
            <svg viewBox="0 0 20 20" className="h-[18px] w-[18px]"><path d="M3 14l7-9 7 9" fill="none" stroke="#ddd" strokeWidth="1.5" /></svg>
            <svg viewBox="0 0 24 28" className="ml-[12px] h-[28px] w-[24px]">
                <path d="M2 10h5l5-5v18l-5-5H2z" fill="none" stroke="#ddd" strokeWidth="1.4" />
                <path d="M15 9q3 5 0 10M18 6q5 8 0 16" fill="none" stroke="#ddd" strokeWidth="1.4" />
            </svg>
            <svg viewBox="0 0 24 28" className="ml-[8px] h-[28px] w-[24px]">
                <path d="M2 2h12v16H2zM8 18v7M3 26h12M18 8h4v9h-8" fill="none" stroke="#ddd" strokeWidth="1.4" />
            </svg>
            <svg viewBox="0 0 24 32" className="ml-[14px] h-[32px] w-[24px]">
                <path d="M15 3c6 0 5 7 2 11l-7 12c-3 5-8 1-5-3l9-15" fill="none" stroke="#ddd" strokeWidth="1.5" />
            </svg>
            <svg viewBox="0 0 32 26" className="ml-[15px] h-[26px] w-[32px]">
                <rect x="1" y="1" width="30" height="24" fill="none" stroke="#ddd" strokeWidth="1.5" />
                <path d="M4 7h24M4 11h24M8 17h16" stroke="#ddd" strokeWidth="2" strokeDasharray="2 1" />
            </svg>
            <svg viewBox="0 0 24 24" className="ml-[15px] h-[24px] w-[22px]">
                <circle cx="12" cy="12" r="11" fill="#777" />
                <path d="M7 7l10 10M17 7L7 17" stroke="#222" strokeWidth="2.4" />
            </svg>
            <div className="ml-[15px] flex w-[90px] flex-col items-center text-[18px] leading-[26px] text-[#c8c8c8]">
                <span>19:02</span>
                <span>2023/1/23</span>
            </div>
            <svg viewBox="0 0 24 28" className="ml-[22px] mr-[26px] h-[28px] w-[24px]">
                <path d="M2 2h20v18h-6l-4 5-4-5H2z" fill="none" stroke="#ddd" strokeWidth="1.5" />
            </svg>
            <div className="mr-[6px] h-[40px] w-px self-start bg-[#666]" />
        </div>
    </div>
);

const RemoteOverlay = () => (
    <div className="absolute left-[1030px] top-[11px] flex h-[51px] w-[360px] rounded-t-[30px] bg-[#efefef]">
        <svg viewBox="1030 11 360 85" className="absolute left-0 top-0 h-[85px] w-[360px]">
            <g fill="none" stroke="#2e2e2e">
                <circle cx="1089" cy="56" r="24" strokeWidth="5" />
                <path d="M1076 56h26M1089 43v26" strokeWidth="5" />
                <path d="M1107 75l13 14" strokeWidth="6" />
            </g>
            <circle cx="1204" cy="58.5" r="34.5" fill="#2e2e2e" />
            <g fill="none" stroke="#fff" strokeWidth="6">
                <path d="M1220 37l-26 13 24 13" />
                <path d="M1190 54l18 13-18 14" />
            </g>
            <rect x="1281" y="35" width="71" height="48" fill="none" stroke="#2e2e2e" strokeWidth="4" />
            <path d="M1281 35h71" stroke="#2e2e2e" strokeWidth="6" />
            <g fill="#2e2e2e">
                {[1289, 1301, 1313, 1325, 1337].map((x) => (
                    <g key={x}>
                        <rect x={x} y="44" width="8" height="9" />
                        <rect x={x} y="57" width="8" height="9" />
                    </g>
                ))}
                <rect x="1301" y="70" width="31" height="8" />
            </g>
        </svg>
    </div>
);

export default function App() {
    return (
        <div className="relative h-[1080px] w-[2340px] overflow-hidden bg-black pl-[78px] [font-family:'Liberation_Sans','Noto_Sans_CJK_SC',sans-serif]">
            <div className="flex h-[1021px] flex-col">
                <div className="flex h-[32px] items-center bg-white pl-[3px] text-[18px] text-[#222]">
                    <svg viewBox="0 0 22 24" className="mr-[8px] h-[24px] w-[22px]">
                        <rect width="22" height="24" fill="#0a0a0a" />
                        <path d="M3 3h16L12 12H7z" fill="#2c7fc4" />
                        <path d="M14 9L4 21h5l10-12z" fill="#7fc0f0" />
                    </svg>
                    829679: ZealCapitalMarketSC-Live - Zeal Capital Market (Seychelles) Limited - [XAUUSD,M15]
                    <div className="ml-auto flex items-center text-[#333]">
                        <span className="mr-[53px] h-[2px] w-[11px] bg-[#333]" />
                        <svg viewBox="0 0 14 16" className="mr-[54px] h-[16px] w-[14px]">
                            <path d="M4 1h8v11M2 4h8v11H2z" fill="none" stroke="#333" strokeWidth="1.6" />
                        </svg>
                        <svg viewBox="0 0 16 18" className="mr-[27px] h-[18px] w-[16px]">
                            <path d="M2 1l12 16M14 1L2 17" stroke="#333" strokeWidth="1.3" />
                        </svg>
                    </div>
                </div>
                <div className="flex h-[30px] items-center border-b-2 border-[#c4c4c4] bg-[#eeeeee] text-[16.5px] text-[#222]">
                    <svg viewBox="0 0 20 24" className="ml-[7px] h-[24px] w-[20px]">
                        <rect x="1" y="1" width="18" height="22" fill="#e8eef6" stroke="#8aa2c0" />
                        <path d="M4 6h12M4 10h12" stroke="#5d86b6" strokeWidth="1.5" />
                        <rect x="9" y="13" width="7" height="7" fill="#b5cbe2" />
                    </svg>
                    <span className="ml-[11px] w-[80px]">文件(F)</span>
                    <span className="w-[81px]">显示(V)</span>
                    <span className="w-[76px]">插入(I)</span>
                    <span className="w-[82px]">图表(C)</span>
                    <span className="w-[80px]">工具(T)</span>
                    <span className="w-[87px]">窗口(W)</span>
                    <span>帮助(H)</span>
                    <div className="ml-auto mr-[3px] flex gap-[3px] text-[#666]">
                        <div className="flex h-[26px] w-[24px] items-end justify-center bg-[#f8f8f8] pb-[5px]"><div className="h-[3px] w-[7px] bg-[#888]" /></div>
                        <div className="flex h-[26px] w-[24px] items-center justify-center bg-[#f8f8f8]">
                            <svg viewBox="0 0 12 14" className="h-[14px] w-[11px]"><path d="M4 1h7v7M1 4h7v9H1z" fill="none" stroke="#888" strokeWidth="1.3" /></svg>
                        </div>
                        <div className="flex h-[26px] w-[24px] items-center justify-center bg-[#f8f8f8] text-[15px] font-bold">X</div>
                    </div>
                </div>
                <ToolbarOne />
                <ToolbarTwo />
                <div className="h-[2px] bg-[#555]" />
                <div className="flex h-[490px]">
                    <MarketWatch />
                    <div className="flex w-[1937px] shrink-0 flex-col">
                        <ChartPanel />
                        <ChartTabs />
                    </div>
                </div>
                <div className="flex h-[363px]">
                    <div className="relative w-[21px] shrink-0 bg-gradient-to-b from-[#cfdcee] to-[#aec6e2]">
                        <div className="flex h-[20px] items-end justify-center bg-white text-[13px] font-bold leading-none text-[#222]">×</div>
                        <div className="absolute bottom-[6px] left-[2px] text-[16px] leading-[16px] text-[#333] [writing-mode:vertical-rl]">终端</div>
                    </div>
                    <div className="flex flex-1 flex-col">
                        <OrdersTable />
                        <BottomTabs />
                        <div className="h-[5px] bg-[#f4f4f4]" />
                    </div>
                </div>
                <StatusBar />
            </div>
            <div className="-ml-[78px]"><Taskbar /></div>

            <RemoteOverlay />

            {/* mouse cursor over the scrollbar */}
            <svg viewBox="0 0 16 24" className="absolute left-[2324px] top-[942px] h-[26px] w-[16px]">
                <path d="M1 1v19l5-4 3 7 3-1-3-7h6z" fill="#fff" stroke="#222" />
            </svg>

            {/* share watermark */}
            <div className="absolute left-[2038px] top-[995px] flex items-center text-white [text-shadow:0_0_2px_#333]">
                <svg viewBox="0 0 38 56" className="h-[56px] w-[37px]">
                    <rect x="1" y="1" width="36" height="44" rx="17" fill="#fff" />
                    <path d="M12 45l7 10 7-10z" fill="#fff" />
                    <path d="M22 11c-5 0-6 4-7 9l-3 15M10 22h12M27 20L17 40" fill="none" stroke="#111" strokeWidth="3.4" />
                </svg>
                <span className="ml-[13px] text-[40px] leading-[50px]">@交易员楚飞</span>
            </div>
        </div>
    );
}
